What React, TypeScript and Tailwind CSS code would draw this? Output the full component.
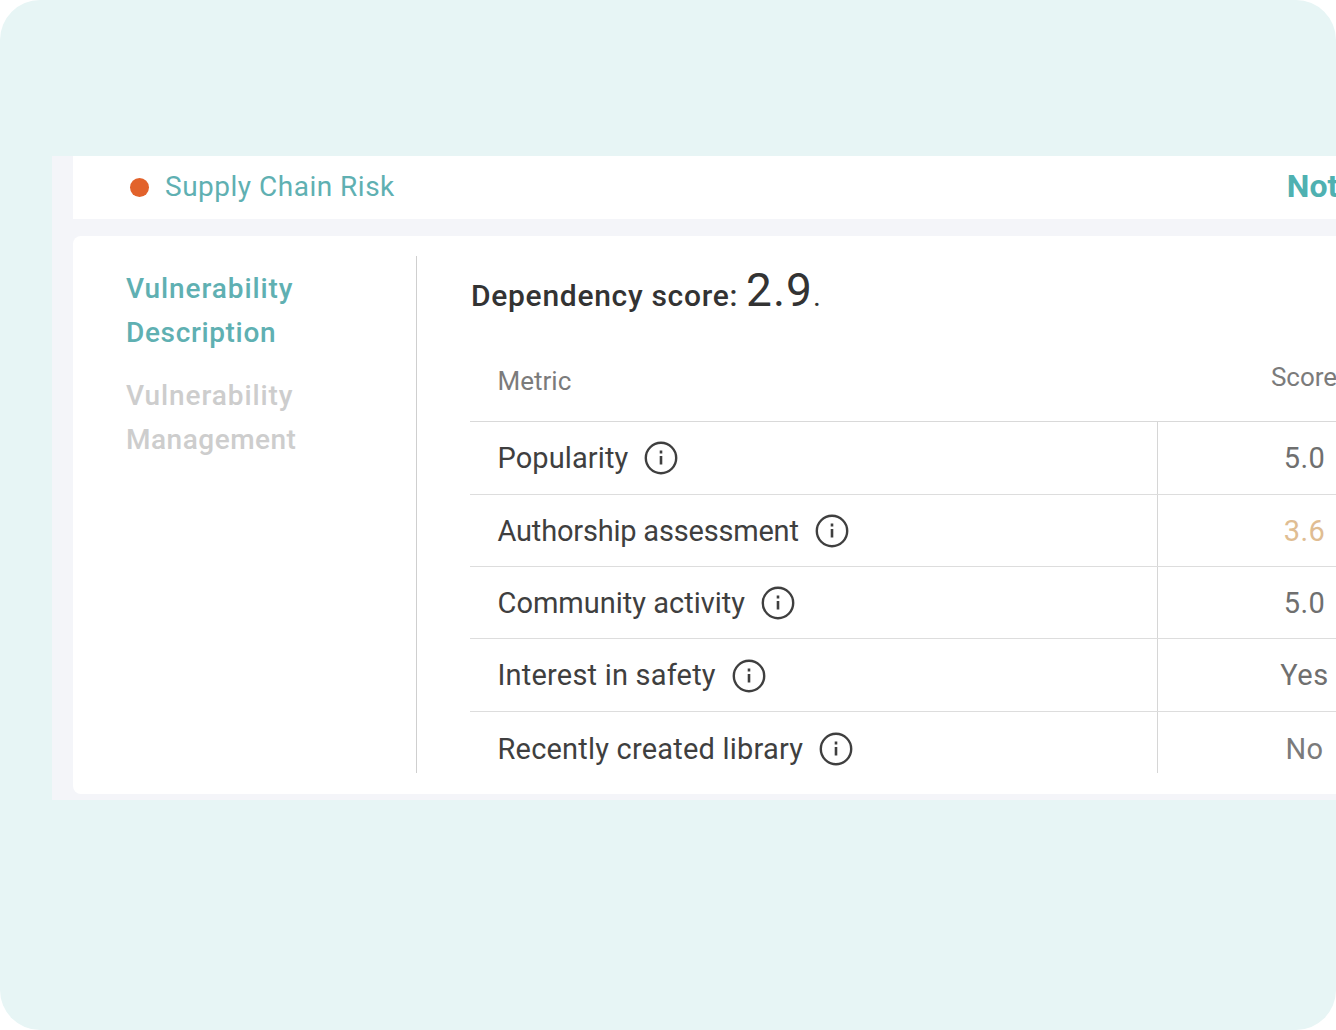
const rows = [
  { metric: 'Popularity', score: '5.0', tone: 'text-[#6f6f6f]', track: 'tracking-[0.1px]' },
  { metric: 'Authorship assessment', score: '3.6', tone: 'text-[#e0bd92]', track: 'tracking-[-0.2px]' },
  { metric: 'Community activity', score: '5.0', tone: 'text-[#6f6f6f]', track: 'tracking-normal' },
  { metric: 'Interest in safety', score: 'Yes', tone: 'text-[#6f6f6f]', track: 'tracking-[0.2px]' },
  { metric: 'Recently created library', score: 'No', tone: 'text-[#7b7b7b]', track: 'tracking-[0.2px]' },
];

function InfoIcon() {
  return (
    <svg viewBox="0 0 34 34" fill="none" stroke="#3f3f3f" className="ml-[16px] mt-[1px] h-[34px] w-[34px] shrink-0">
      <circle cx="17" cy="17" r="15.2" strokeWidth="2.4" />
      <path d="M17 15v8.5" strokeWidth="2.6" />
      <path d="M17 9.5v3" strokeWidth="2.6" />
    </svg>
  );
}

export default function App() {
  return (
    <div className="h-[1030px] w-[1336px] overflow-hidden rounded-[40px] bg-[#e7f5f5] pt-[156px] pl-[52px] font-['Roboto',sans-serif]">
      <div className="h-[644px] w-[1400px] bg-[#f4f5f9] pl-[21px]">
        {/* Header bar */}
        <div className="flex h-[63px] items-center bg-white pl-[57px]">
          <span className="h-[19px] w-[19px] rounded-full bg-[#e2622b]" />
          <span className="ml-[16px] pb-[2px] text-[28px] tracking-[0.5px] text-[#5fb0b2]">Supply Chain Risk</span>
          <span className="ml-[892px] pb-[4px] text-[32px] font-bold text-[#4fb1b1]">Not</span>
        </div>

        {/* Card */}
        <div className="mt-[17px] flex h-[558px] rounded-l-[8px] bg-white pt-[20px]">
          <div className="h-[517px] w-[344px] shrink-0 border-r-[1.5px] border-[#cfcfcf] pl-[53px] pt-[11px] text-[28px] leading-[44px] font-medium">
            <div className="text-[#5fb0b2]">
              <div className="tracking-[0.9px]">Vulnerability</div>
              <div className="tracking-[0.65px]">Description</div>
            </div>
            <div className="mt-[19px] text-[#cdcdcd]">
              <div className="tracking-[0.9px]">Vulnerability</div>
              <div className="tracking-[0.5px]">Management</div>
            </div>
          </div>

          <div className="ml-[53px] w-[983px] shrink-0">
            <h2 className="flex h-[93px] items-baseline pl-[1px] text-[30px] font-medium tracking-[0.7px] text-[#333333]">
              Dependency score:
              <span className="ml-[8px] text-[46px] font-normal tracking-[1px]">2.9</span>
              <span className="text-[30px] font-normal">.</span>
            </h2>

            <div className="grid h-[73.2px] grid-cols-[687px_296px] border-b border-[#d9d9d9] text-[26px] text-[#7b7b7b]">
              <div className="pl-[27.5px] pt-[13px]">Metric</div>
              <div className="pt-[9px] pr-[2px] text-center">Score</div>
            </div>

            {rows.map((row, i) => {
              const last = i === rows.length - 1;
              return (
                <div
                  key={row.metric}
                  className={`grid grid-cols-[687px_296px] text-[29px] ${last ? 'h-[61px]' : 'h-[72.4px] border-b border-[#dddddd]'}`}
                >
                  <div className={`flex items-center pl-[27.5px] text-[#3f3f3f] ${last ? 'pt-[12px]' : ''}`}>
                    <span className={`pt-[2px] ${row.track}`}>{row.metric}</span>
                    <InfoIcon />
                  </div>
                  <div className={`flex items-center justify-center border-l border-[#d6d6d6] pr-[2px] tracking-[0.5px] ${row.tone} ${last ? 'pt-[12px]' : ''}`}>
                    <span className="pt-[2px]">{row.score}</span>
                  </div>
                </div>
              );
            })}
          </div>
        </div>
      </div>
    </div>
  );
}
